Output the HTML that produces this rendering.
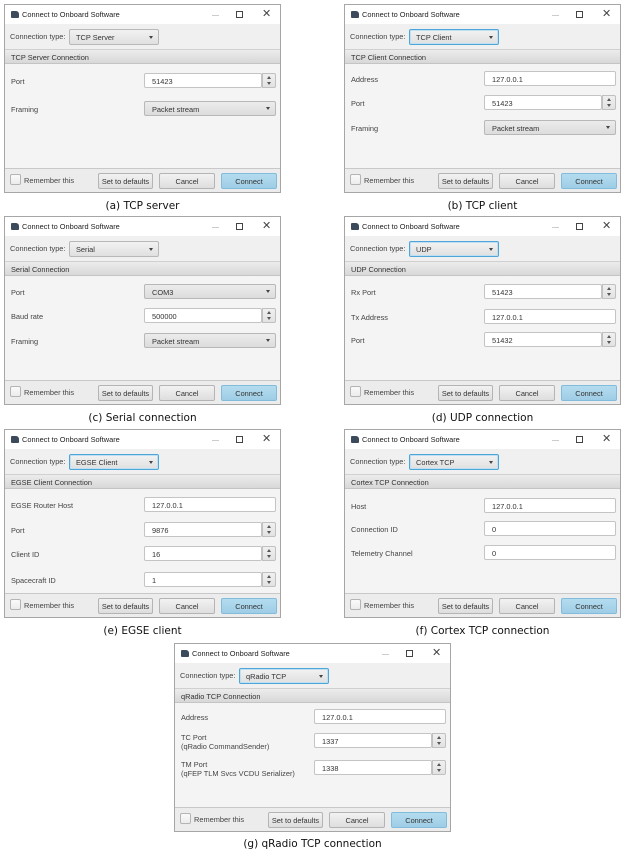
<!DOCTYPE html>
<html><head><meta charset="utf-8"><style>
*{box-sizing:border-box;margin:0;padding:0}
body{width:625px;height:852px;background:#fff;position:relative;font-family:"Liberation Sans",Arial,sans-serif;overflow:hidden}
.d{position:absolute;width:277px;height:189px;border:1px solid #a6a6a6;background:#f4f4f4;font-size:7.4px;color:#333}
.d *{position:absolute}
.tb{left:0;top:0;width:275px;height:19px;background:#fff}
.ic{left:6px;top:6px;width:8px;height:7px;background:#3c4b5c;border-radius:1px 3px 1px 1px}
.tt{left:17px;top:5px;color:#222;white-space:nowrap}
.mn{left:207px;top:10px;width:7px;height:1px;background:#ccc}
.mx{left:231px;top:6px;width:7px;height:7px;border:1px solid #444}
.xx{left:257px;top:2px;font-size:11px;color:#444}
.tr{left:0;top:19px;width:275px;height:25px;background:#f0f0f0}
.tl{left:5px;top:27px;color:#444}
.cb{left:64px;top:24px;width:90px;height:16px;border:1px solid #b8b8b8;border-radius:2px;background:linear-gradient(#f2f2f2,#e0e0e0);padding:3px 0 0 6px}
.cb.f{border:1px solid #4ea6d8;box-shadow:0 0 0 1px #bfe0f2 inset}
.ar{width:0;height:0;border-left:2.5px solid transparent;border-right:2.5px solid transparent;border-top:3px solid #444;top:6px}
.cb .ar{left:79px}
.hd{left:0;top:44px;width:275px;height:15px;background:linear-gradient(#ececec,#d8d8d8);border-top:1px solid #d0d0d0;border-bottom:1px solid #c4c4c4;padding:3px 0 0 6px;color:#333}
.lb{left:6px;color:#444;line-height:9px}
.fd{left:139px;width:132px;height:15px;background:#fff;border:1px solid #c4c4c4;border-radius:2px;padding:3px 0 0 7px;color:#333}
.fd.s{width:118px}
.sp{left:257px;width:14px;height:15px;border:1px solid #c0c0c0;background:linear-gradient(#f0f0f0,#e2e2e2);border-radius:0 2px 2px 0}
.sp:before{content:"";position:absolute;left:4px;top:2px;border-left:2.5px solid transparent;border-right:2.5px solid transparent;border-bottom:3px solid #555}
.sp:after{content:"";position:absolute;left:4px;top:8px;border-left:2.5px solid transparent;border-right:2.5px solid transparent;border-top:3px solid #555}
.fc{left:139px;width:132px;height:15px;border:1px solid #b8b8b8;border-radius:2px;background:linear-gradient(#ececec,#dcdcdc);padding:3px 0 0 7px}
.fc .ar{left:121px;top:5px}
.ft{left:0;top:163px;width:275px;height:24px;background:#ececec;border-top:1px solid #c8c8c8}
.ck{left:5px;top:169px;width:11px;height:11px;border:1px solid #b4b4b4;background:linear-gradient(#fafafa,#ececec);border-radius:2px}
.rl{left:19px;top:171px;color:#444}
.bt{top:168px;height:16px;border:1px solid #b4b4b4;border-radius:2px;background:linear-gradient(#f2f2f2,#dedede);text-align:center;padding-top:3px;color:#333}
.b1{left:93px;width:55px}.b2{left:154px;width:56px}
.b3{left:216px;width:56px;background:linear-gradient(#b4dcef,#9fcde6);border-color:#82bcdc}
.cap{position:absolute;font-family:"DejaVu Sans",sans-serif;font-size:10.5px;color:#111;width:277px;text-align:center}
</style></head><body>

<!-- (a) -->
<div class="d" style="left:4px;top:4px">
<div class="tb"></div><div class="ic"></div><div class="tt">Connect to Onboard Software</div><div class="mn"></div><div class="mx"></div><div class="xx">✕</div>
<div class="tr"></div><div class="tl">Connection type:</div><div class="cb">TCP Server<div class="ar"></div></div>
<div class="hd">TCP Server Connection</div>
<div class="lb" style="top:72px">Port</div><div class="fd s" style="top:68px">51423</div><div class="sp" style="top:68px"></div>
<div class="lb" style="top:100px">Framing</div><div class="fc" style="top:96px">Packet stream<div class="ar"></div></div>
<div class="ft"></div><div class="ck"></div><div class="rl">Remember this</div>
<div class="bt b1">Set to defaults</div><div class="bt b2">Cancel</div><div class="bt b3">Connect</div>
</div>
<div class="cap" style="left:4px;top:200px">(a) TCP server</div>

<!-- (b) -->
<div class="d" style="left:344px;top:4px">
<div class="tb"></div><div class="ic"></div><div class="tt">Connect to Onboard Software</div><div class="mn"></div><div class="mx"></div><div class="xx">✕</div>
<div class="tr"></div><div class="tl">Connection type:</div><div class="cb f">TCP Client<div class="ar"></div></div>
<div class="hd">TCP Client Connection</div>
<div class="lb" style="top:70px">Address</div><div class="fd" style="top:66px">127.0.0.1</div>
<div class="lb" style="top:94px">Port</div><div class="fd s" style="top:90px">51423</div><div class="sp" style="top:90px"></div>
<div class="lb" style="top:119px">Framing</div><div class="fc" style="top:115px">Packet stream<div class="ar"></div></div>
<div class="ft"></div><div class="ck"></div><div class="rl">Remember this</div>
<div class="bt b1">Set to defaults</div><div class="bt b2">Cancel</div><div class="bt b3">Connect</div>
</div>
<div class="cap" style="left:344px;top:200px">(b) TCP client</div>

<!-- (c) -->
<div class="d" style="left:4px;top:216px">
<div class="tb"></div><div class="ic"></div><div class="tt">Connect to Onboard Software</div><div class="mn"></div><div class="mx"></div><div class="xx">✕</div>
<div class="tr"></div><div class="tl">Connection type:</div><div class="cb">Serial<div class="ar"></div></div>
<div class="hd">Serial Connection</div>
<div class="lb" style="top:71px">Port</div><div class="fc" style="top:67px">COM3<div class="ar"></div></div>
<div class="lb" style="top:95px">Baud rate</div><div class="fd s" style="top:91px">500000</div><div class="sp" style="top:91px"></div>
<div class="lb" style="top:120px">Framing</div><div class="fc" style="top:116px">Packet stream<div class="ar"></div></div>
<div class="ft"></div><div class="ck"></div><div class="rl">Remember this</div>
<div class="bt b1">Set to defaults</div><div class="bt b2">Cancel</div><div class="bt b3">Connect</div>
</div>
<div class="cap" style="left:4px;top:412px">(c) Serial connection</div>

<!-- (d) -->
<div class="d" style="left:344px;top:216px">
<div class="tb"></div><div class="ic"></div><div class="tt">Connect to Onboard Software</div><div class="mn"></div><div class="mx"></div><div class="xx">✕</div>
<div class="tr"></div><div class="tl">Connection type:</div><div class="cb f">UDP<div class="ar"></div></div>
<div class="hd">UDP Connection</div>
<div class="lb" style="top:71px">Rx Port</div><div class="fd s" style="top:67px">51423</div><div class="sp" style="top:67px"></div>
<div class="lb" style="top:96px">Tx Address</div><div class="fd" style="top:92px">127.0.0.1</div>
<div class="lb" style="top:119px">Port</div><div class="fd s" style="top:115px">51432</div><div class="sp" style="top:115px"></div>
<div class="ft"></div><div class="ck"></div><div class="rl">Remember this</div>
<div class="bt b1">Set to defaults</div><div class="bt b2">Cancel</div><div class="bt b3">Connect</div>
</div>
<div class="cap" style="left:344px;top:412px">(d) UDP connection</div>

<!-- (e) -->
<div class="d" style="left:4px;top:429px">
<div class="tb"></div><div class="ic"></div><div class="tt">Connect to Onboard Software</div><div class="mn"></div><div class="mx"></div><div class="xx">✕</div>
<div class="tr"></div><div class="tl">Connection type:</div><div class="cb f">EGSE Client<div class="ar"></div></div>
<div class="hd">EGSE Client Connection</div>
<div class="lb" style="top:71px">EGSE Router Host</div><div class="fd" style="top:67px">127.0.0.1</div>
<div class="lb" style="top:96px">Port</div><div class="fd s" style="top:92px">9876</div><div class="sp" style="top:92px"></div>
<div class="lb" style="top:120px">Client ID</div><div class="fd s" style="top:116px">16</div><div class="sp" style="top:116px"></div>
<div class="lb" style="top:146px">Spacecraft ID</div><div class="fd s" style="top:142px">1</div><div class="sp" style="top:142px"></div>
<div class="ft"></div><div class="ck"></div><div class="rl">Remember this</div>
<div class="bt b1">Set to defaults</div><div class="bt b2">Cancel</div><div class="bt b3">Connect</div>
</div>
<div class="cap" style="left:4px;top:625px">(e) EGSE client</div>

<!-- (f) -->
<div class="d" style="left:344px;top:429px">
<div class="tb"></div><div class="ic"></div><div class="tt">Connect to Onboard Software</div><div class="mn"></div><div class="mx"></div><div class="xx">✕</div>
<div class="tr"></div><div class="tl">Connection type:</div><div class="cb f">Cortex TCP<div class="ar"></div></div>
<div class="hd">Cortex TCP Connection</div>
<div class="lb" style="top:72px">Host</div><div class="fd" style="top:68px">127.0.0.1</div>
<div class="lb" style="top:95px">Connection ID</div><div class="fd" style="top:91px">0</div>
<div class="lb" style="top:119px">Telemetry Channel</div><div class="fd" style="top:115px">0</div>
<div class="ft"></div><div class="ck"></div><div class="rl">Remember this</div>
<div class="bt b1">Set to defaults</div><div class="bt b2">Cancel</div><div class="bt b3">Connect</div>
</div>
<div class="cap" style="left:344px;top:625px">(f) Cortex TCP connection</div>

<!-- (g) -->
<div class="d" style="left:174px;top:643px">
<div class="tb"></div><div class="ic"></div><div class="tt">Connect to Onboard Software</div><div class="mn"></div><div class="mx"></div><div class="xx">✕</div>
<div class="tr"></div><div class="tl">Connection type:</div><div class="cb f">qRadio TCP<div class="ar"></div></div>
<div class="hd">qRadio TCP Connection</div>
<div class="lb" style="top:69px">Address</div><div class="fd" style="top:65px">127.0.0.1</div>
<div class="lb" style="top:89px">TC Port<br>(qRadio CommandSender)</div><div class="fd s" style="top:89px">1337</div><div class="sp" style="top:89px"></div>
<div class="lb" style="top:116px">TM Port<br>(qFEP TLM Svcs VCDU Serializer)</div><div class="fd s" style="top:116px">1338</div><div class="sp" style="top:116px"></div>
<div class="ft"></div><div class="ck"></div><div class="rl">Remember this</div>
<div class="bt b1">Set to defaults</div><div class="bt b2">Cancel</div><div class="bt b3">Connect</div>
</div>
<div class="cap" style="left:174px;top:838px">(g) qRadio TCP connection</div>

</body></html>
